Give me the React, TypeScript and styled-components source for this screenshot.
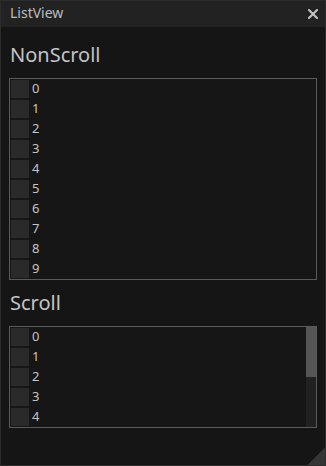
import React from "react";
import styled, { createGlobalStyle } from "styled-components";

const Global = createGlobalStyle`
  html, body { margin: 0; padding: 0; background: #151515; }
  body { font-family: "Noto Sans", "Open Sans", sans-serif; }
  * { box-sizing: border-box; }
`;

const Window = styled.div`
  position: relative;
  width: 326px;
  height: 466px;
  background: #151515;
  border: 1px solid #2c2c2c;
  display: flex;
  flex-direction: column;
  overflow: hidden;
`;

const TitleBar = styled.div`
  height: 26px;
  flex: none;
  background: #222222;
  display: flex;
  align-items: center;
  justify-content: space-between;
  padding: 0 7px 0 9px;
`;

const Title = styled.span`
  font-size: 14px;
  line-height: 26px;
  margin-top: -2px;
  color: #bdbdbd;
`;

const CloseButton = styled.button`
  border: none;
  background: transparent;
  padding: 0;
  width: 10px;
  height: 10px;
  display: flex;
  margin-top: -1px;
  cursor: pointer;
`;

const Content = styled.div`
  padding: 14px 8px 0 8px;
  display: flex;
  flex-direction: column;
`;

const Heading = styled.div<{ $first?: boolean }>`
  font-size: 20px;
  line-height: 28px;
  height: 28px;
  color: #c4c4c4;
  margin-top: ${(p) => (p.$first ? "0" : "9px")};
  padding-left: 1px;
`;

const ListBox = styled.div<{ $height: number }>`
  margin-top: 9px;
  width: 308px;
  height: ${(p) => p.$height + 2}px;
  border: 1px solid #5a5a5a;
  background: #161616;
  display: flex;
  overflow: hidden;
`;

const Rows = styled.div`
  flex: 1;
  display: flex;
  flex-direction: column;
`;

const Row = styled.div`
  height: 20px;
  flex: none;
  display: flex;
  align-items: center;
  padding-left: 1px;
`;

const Square = styled.div`
  width: 18px;
  height: 18px;
  background: #2a2a2a;
`;

const Label = styled.span`
  margin-left: 3px;
  font-size: 13px;
  line-height: 18px;
  margin-top: -2px;
  color: #c4c4c4;
`;

const Scrollbar = styled.div`
  width: 10px;
  flex: none;
  background: #212121;
  display: flex;
  flex-direction: column;
  margin-top: -1px;
`;

const Thumb = styled.div`
  background: #555555;
  flex: none;
`;

const Resize = styled.div`
  position: absolute;
  right: 0;
  bottom: 0;
  width: 18px;
  height: 18px;
  background: linear-gradient(135deg, transparent 50%, #353535 50%);
`;

const items = Array.from({ length: 10 }, (_, i) => i);
const ROW = 20;

export default function App() {
  const visible = 100;
  const total = items.length * ROW;
  const thumb = (visible / total) * visible + 1;
  const visibleItems = items.slice(0, Math.ceil(visible / ROW));
  return (
    <>
      <Global />
      <Window>
        <TitleBar>
          <Title>ListView</Title>
          <CloseButton aria-label="Close">
            <svg width="10" height="10" viewBox="0 0 10 10">
              <path d="M1 1 L9 9 M9 1 L1 9" stroke="#c4c4c4" strokeWidth="2" strokeLinecap="square" />
            </svg>
          </CloseButton>
        </TitleBar>
        <Content>
          <Heading $first>NonScroll</Heading>
          <ListBox $height={total}>
            <Rows>
              {items.map((i) => (
                <Row key={i}>
                  <Square />
                  <Label>{i}</Label>
                </Row>
              ))}
            </Rows>
          </ListBox>
          <Heading>Scroll</Heading>
          <ListBox $height={visible}>
            <Rows>
              {visibleItems.map((i) => (
                <Row key={i}>
                  <Square />
                  <Label>{i}</Label>
                </Row>
              ))}
            </Rows>
            <Scrollbar>
              <Thumb style={{ height: thumb }} />
            </Scrollbar>
          </ListBox>
        </Content>
        <Resize />
      </Window>
    </>
  );
}
